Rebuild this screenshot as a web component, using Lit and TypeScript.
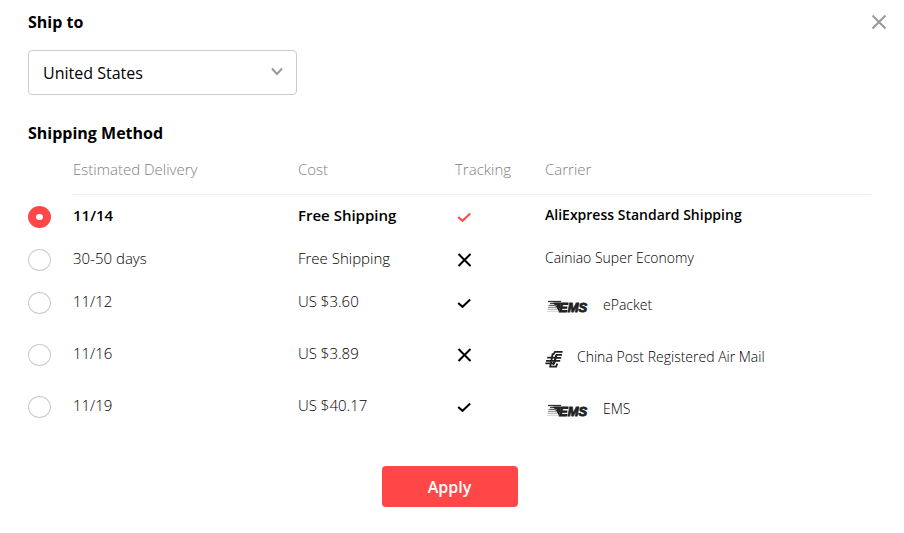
import { LitElement, html, css, svg } from "lit";
import { customElement, state } from "lit/decorators.js";

type Logo = "ems" | "china-post";

interface Method {
  delivery: string;
  cost: string;
  tracked: boolean;
  carrier: string;
  logo?: Logo;
}

const METHODS: Method[] = [
  { delivery: "11/14", cost: "Free Shipping", tracked: true, carrier: "AliExpress Standard Shipping" },
  { delivery: "30-50 days", cost: "Free Shipping", tracked: false, carrier: "Cainiao Super Economy" },
  { delivery: "11/12", cost: "US $3.60", tracked: true, carrier: "ePacket", logo: "ems" },
  { delivery: "11/16", cost: "US $3.89", tracked: false, carrier: "China Post Registered Air Mail", logo: "china-post" },
  { delivery: "11/19", cost: "US $40.17", tracked: true, carrier: "EMS", logo: "ems" },
];

const tick = svg`<path d="M3.2 9 7.5 12.8 15.2 5.6" />`;
const cross = svg`<path d="M3.5 3 15.5 15M15.5 3 3.5 15" />`;

const emsLogo = html`
  <svg class="logo" width="44" height="16" viewBox="0 0 44 16" role="img" aria-label="EMS">
    <path d="M3 2.5H16" stroke="#333" stroke-width="1.3" />
    <path d="M5 4.5H15.6" stroke="#444" stroke-width="1.3" />
    <path d="M8 3.5H15.8L14.2 13Z" fill="#222" />
    <path d="M3.6 6.5H12" stroke="#666" stroke-width="1.2" />
    <path d="M3 8.5H12" stroke="#999" stroke-width="1.2" />
    <path d="M2.5 10.5H13" stroke="#bbb" stroke-width="1.2" />
    <path d="M2 12.5H13.4" stroke="#ddd" stroke-width="1.2" />
    <text class="logo-text" x="14" y="13">EMS</text>
  </svg>
`;

const chinaPostLogo = html`
  <svg class="logo" width="18" height="18" viewBox="0 0 18 18" role="img" aria-label="China Post">
    <g fill="none" stroke="#222" stroke-width="1.8">
      <path d="M17.6 1.8H10L8.6 4.2H7.6L5.2 16.6H11.2L12.2 13.4" />
      <path d="M17 4.8H11.6L10.4 7.6H2.2" />
      <path d="M1 10.8H9.6L10.8 7.8H16.2" />
      <path d="M.4 13.4H9L10.4 10.8H15.2" />
      <path d="M11.6 4.8 8.2 15" />
    </g>
  </svg>
`;

@customElement("app-root")
export class AppRoot extends LitElement {
  @state() private selected = 0;

  static styles = css`
    :host {
      display: block;
      position: relative;
      box-sizing: border-box;
      padding: 11px 33px 26px 28px;
      background: #fff;
      color: #000;
      font: 300 15px/20px "Open Sans", sans-serif;
    }
    * {
      box-sizing: border-box;
    }
    .title {
      display: block;
      margin: 0;
      font-size: 16px;
      font-weight: 700;
      line-height: 22px;
    }
    .close {
      position: absolute;
      top: 10px;
      right: 13px;
      display: grid;
      place-items: center;
      width: 24px;
      height: 24px;
      padding: 0;
      border: 0;
      background: none;
      cursor: pointer;
    }
    .country {
      position: relative;
      width: 269px;
      max-width: 100%;
      margin: 17px 0 27px;
    }
    .select {
      display: block;
      width: 100%;
      height: 45px;
      padding: 0 40px 0 14px;
      border: 1px solid #ccc;
      border-radius: 4px;
      background: #fff;
      color: #000;
      font: inherit;
      font-size: 16px;
      font-weight: 400;
      appearance: none;
    }
    .chevron {
      position: absolute;
      top: 17px;
      right: 14px;
      pointer-events: none;
    }
    .methods {
      width: 100%;
      margin: 0;
      border-collapse: separate;
      border-spacing: 0;
      table-layout: fixed;
    }
    .c-radio { width: 45px; }
    .c-delivery { width: 225px; }
    .c-cost { width: 157px; }
    .c-track { width: 90px; }
    th,
    td {
      padding: 0;
      text-align: left;
      vertical-align: top;
      font-weight: 300;
    }
    .head {
      padding: 15px 0;
      border-bottom: 1px solid #f0f0f0;
      color: #808080;
    }
    .cell {
      padding: 10px 0 11px;
    }
    .pick {
      padding: 11px 0 10px;
    }
    .row.on .cell {
      font-weight: 600;
    }
    .radio {
      display: block;
      width: 23px;
      height: 22px;
      margin: 0;
      border: 1px solid #ccc;
      border-radius: 50%;
      background: #fff;
      appearance: none;
    }
    .radio:checked {
      border: 8px solid #ff4747;
    }
    .mark {
      display: block;
      margin-top: 3px;
      fill: none;
      stroke: #000;
      stroke-width: 2;
    }
    .on .mark {
      stroke: #ff4747;
    }
    .carrier {
      font-size: 14px;
    }
    .with-logo {
      display: flex;
      align-items: center;
      gap: 14px;
      height: 28px;
      margin-bottom: 3px;
    }
    .logo {
      flex: none;
      margin-top: 4px;
    }
    .logo-text {
      font: italic 700 13px "Liberation Sans", sans-serif;
      fill: #222;
      stroke: #222;
      stroke-width: 0.9px;
    }
    .actions {
      display: flex;
      justify-content: center;
      margin-top: 29px;
    }
    .apply {
      width: 136px;
      height: 41px;
      padding: 0;
      border: 0;
      border-radius: 4px;
      background: #ff4747;
      color: #fff;
      font: inherit;
      font-size: 16px;
      font-weight: 600;
      cursor: pointer;
    }
  `;

  private row(m: Method, i: number) {
    const on = i === this.selected;
    return html`
      <tr class="row ${on ? "on" : ""}">
        <td class="pick">
          <input
            class="radio"
            type="radio"
            name="method"
            id="m${i}"
            aria-label=${m.carrier}
            .checked=${on}
            @change=${() => (this.selected = i)}
          />
        </td>
        <td class="cell"><label for="m${i}">${m.delivery}</label></td>
        <td class="cell">${m.cost}</td>
        <td class="cell">
          <svg class="mark" width="18" height="18" viewBox="0 0 18 18" role="img"
            aria-label=${m.tracked ? "Available" : "Not available"}>
            ${m.tracked ? tick : cross}
          </svg>
        </td>
        <td class="cell carrier">
          ${m.logo
            ? html`<div class="with-logo">
                ${m.logo === "ems" ? emsLogo : chinaPostLogo}<span>${m.carrier}</span>
              </div>`
            : m.carrier}
        </td>
      </tr>
    `;
  }

  render() {
    return html`
      <button class="close" aria-label="Close">
        <svg width="16" height="16" viewBox="0 0 16 16" fill="none" stroke="#999" stroke-width="2">
          <path d="M1.5 1.5 14.5 14.5M14.5 1.5 1.5 14.5" />
        </svg>
      </button>
      <label class="title" for="country">Ship to</label>
      <div class="country">
        <select class="select" id="country">
          <option>United States</option>
        </select>
        <svg class="chevron" width="12" height="10" viewBox="0 0 12 10" fill="none" stroke="#999" stroke-width="2">
          <path d="M1 1.5 6 7 11 1.5" />
        </svg>
      </div>
      <h2 class="title">Shipping Method</h2>
      <table class="methods">
        <colgroup>
          <col class="c-radio" /><col class="c-delivery" /><col class="c-cost" /><col class="c-track" /><col />
        </colgroup>
        <thead>
          <tr>
            <td></td>
            <th class="head">Estimated Delivery</th>
            <th class="head">Cost</th>
            <th class="head">Tracking</th>
            <th class="head">Carrier</th>
          </tr>
        </thead>
        <tbody>
          ${METHODS.map((m, i) => this.row(m, i))}
        </tbody>
      </table>
      <div class="actions"><button class="apply">Apply</button></div>
    `;
  }
}
